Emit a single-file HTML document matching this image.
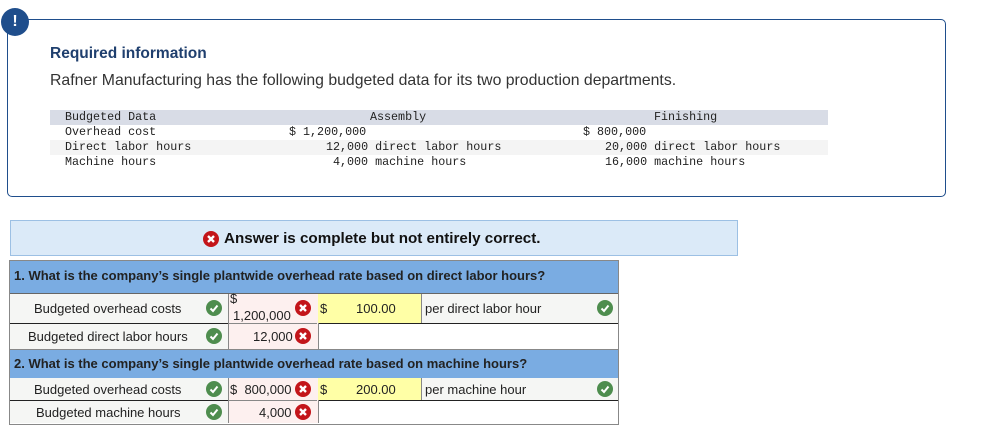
<!DOCTYPE html>
<html><head><style>
body{margin:0;width:999px;height:447px;background:#fff;position:relative;overflow:hidden;font-family:"Liberation Sans",Arial,sans-serif}
.a{position:absolute}
.m{font-family:"Liberation Mono",monospace;font-size:11.7px;color:#222;white-space:pre;line-height:15px}
.ck,.x{position:absolute;width:16px;height:16px;border-radius:50%}
.ck{background:#4e8d4e}
.x{background:#c3151a}
.ck svg,.x svg{position:absolute;left:0;top:0}
.t{font-size:13px;color:#222;position:absolute;white-space:nowrap}
</style></head><body>
<div class="a" style="left:7px;top:19px;width:937px;height:176px;border:1.5px solid #1f4e8c;border-radius:5px"></div>
<div class="a" style="left:1px;top:8px;width:28px;height:28px;border-radius:50%;background:#1f4e8c;color:#fff;font-weight:bold;font-size:16px;text-align:center;line-height:28px">!</div>
<div class="a" style="left:50px;top:45px;font-size:15.5px;font-weight:bold;color:#1f3f6e">Required information</div>
<div class="a" style="left:50px;top:72px;font-size:15.8px;color:#333">Rafner Manufacturing has the following budgeted data for its two production departments.</div>
<div class="a" style="left:50px;top:110px;width:778px;height:15px;background:#d8dce6"></div>
<div class="a" style="left:50px;top:140px;width:778px;height:15px;background:#f4f4f4"></div>
<div class="a m" style="left:65px;top:110px">Budgeted Data
Overhead cost
Direct labor hours
Machine hours</div>
<div class="a m" style="left:370px;top:110px">Assembly</div>
<div class="a m" style="left:289px;top:125px">$ 1,200,000</div>
<div class="a m" style="left:326px;top:140px">12,000 direct labor hours</div>
<div class="a m" style="left:333px;top:155px">4,000 machine hours</div>
<div class="a m" style="left:654px;top:110px">Finishing</div>
<div class="a m" style="left:583px;top:125px">$ 800,000</div>
<div class="a m" style="left:605px;top:140px">20,000 direct labor hours
16,000 machine hours</div>

<div class="a" style="left:10px;top:220px;width:726px;height:34px;background:#dbeaf8;border:1px solid #9cc0e4"></div>
<div class="x" style="left:203px;top:231px"><svg width="16" height="16"><path d="M5 5L11 11M11 5L5 11" stroke="#fff" stroke-width="2.4"/></svg></div>
<div class="a" style="left:224px;top:230px;font-size:15.2px;font-weight:bold;color:#111">Answer is complete but not entirely correct.</div>

<div class="a" style="left:9px;top:260px;width:608px;height:163px;border:1px solid #888;background:#fff"></div>
<div class="a" style="left:10px;top:261px;width:608px;height:32px;background:#7aace2;border-bottom:1px solid #666"></div>
<div class="a" style="left:14px;top:268px;font-size:13px;font-weight:bold;color:#222">1. What is the company’s single plantwide overhead rate based on direct labor hours?</div>
<div class="a" style="left:10px;top:349px;width:608px;height:28px;background:#7aace2;border-top:1px solid #888;border-bottom:1px solid #888"></div>
<div class="a" style="left:14px;top:356px;font-size:13px;font-weight:bold;color:#222">2. What is the company’s single plantwide overhead rate based on machine hours?</div>
<div class="a" style="left:10px;top:294px;width:608px;height:29px;background:#f5f6f4;border-bottom:1px solid #222"></div>
<div class="a" style="left:10px;top:378px;width:608px;height:22px;background:#f5f6f4;border-bottom:1px solid #222"></div>
<div class="a" style="left:10px;top:324px;width:218px;height:25px;background:#f5f6f4"></div>
<div class="a" style="left:10px;top:401px;width:218px;height:22px;background:#f5f6f4"></div>
<div class="a" style="left:228px;top:294px;width:89px;height:55px;background:#fdf0ef;border-left:1px solid #888;border-right:1px solid #888"></div>
<div class="a" style="left:228px;top:378px;width:89px;height:45px;background:#fdf0ef;border-left:1px solid #888;border-right:1px solid #888"></div>
<div class="a" style="left:228px;top:323px;width:89px;height:1px;background:#888"></div>
<div class="a" style="left:228px;top:400px;width:89px;height:1px;background:#888"></div>
<div class="a" style="left:318px;top:294px;width:103px;height:29px;background:#ffffa6;border-right:1px solid #888"></div>
<div class="a" style="left:318px;top:378px;width:103px;height:22px;background:#ffffa6;border-right:1px solid #888"></div>

<div class="t" style="left:34px;top:301px">Budgeted overhead costs</div>
<div class="t" style="left:28px;top:329px">Budgeted direct labor hours</div>
<div class="t" style="left:34px;top:382px">Budgeted overhead costs</div>
<div class="t" style="left:36px;top:405px">Budgeted machine hours</div>
<div class="t" style="left:230px;top:291px">$</div>
<div class="t" style="left:233px;top:308px">1,200,000</div>
<div class="t" style="left:253px;top:329px">12,000</div>
<div class="t" style="left:230px;top:382px">$&nbsp; 800,000</div>
<div class="t" style="left:259px;top:405px">4,000</div>
<div class="t" style="left:320px;top:301px">$</div>
<div class="t" style="left:356px;top:301px">100.00</div>
<div class="t" style="left:320px;top:382px">$</div>
<div class="t" style="left:356px;top:382px">200.00</div>
<div class="t" style="left:425px;top:301px">per direct labor hour</div>
<div class="t" style="left:425px;top:382px">per machine hour</div>

<div class="ck" style="left:206px;top:300px"><svg width="16" height="16"><path d="M4.5 8.5L7 11L11.5 5.5" stroke="#fff" stroke-width="2" fill="none"/></svg></div>
<div class="ck" style="left:206px;top:328px"><svg width="16" height="16"><path d="M4.5 8.5L7 11L11.5 5.5" stroke="#fff" stroke-width="2" fill="none"/></svg></div>
<div class="ck" style="left:206px;top:381px"><svg width="16" height="16"><path d="M4.5 8.5L7 11L11.5 5.5" stroke="#fff" stroke-width="2" fill="none"/></svg></div>
<div class="ck" style="left:206px;top:404px"><svg width="16" height="16"><path d="M4.5 8.5L7 11L11.5 5.5" stroke="#fff" stroke-width="2" fill="none"/></svg></div>
<div class="ck" style="left:597px;top:300px"><svg width="16" height="16"><path d="M4.5 8.5L7 11L11.5 5.5" stroke="#fff" stroke-width="2" fill="none"/></svg></div>
<div class="ck" style="left:597px;top:381px"><svg width="16" height="16"><path d="M4.5 8.5L7 11L11.5 5.5" stroke="#fff" stroke-width="2" fill="none"/></svg></div>

<div class="x" style="left:295px;top:300px"><svg width="16" height="16"><path d="M5 5L11 11M11 5L5 11" stroke="#fff" stroke-width="2.4"/></svg></div>
<div class="x" style="left:295px;top:328px"><svg width="16" height="16"><path d="M5 5L11 11M11 5L5 11" stroke="#fff" stroke-width="2.4"/></svg></div>
<div class="x" style="left:295px;top:381px"><svg width="16" height="16"><path d="M5 5L11 11M11 5L5 11" stroke="#fff" stroke-width="2.4"/></svg></div>
<div class="x" style="left:295px;top:404px"><svg width="16" height="16"><path d="M5 5L11 11M11 5L5 11" stroke="#fff" stroke-width="2.4"/></svg></div>
</body></html>
